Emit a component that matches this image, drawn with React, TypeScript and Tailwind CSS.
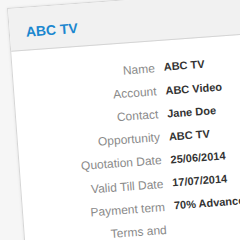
const rows = [
  { label: 'Name', value: 'ABC TV' },
  { label: 'Account', value: 'ABC Video' },
  { label: 'Contact', value: 'Jane Doe' },
  { label: 'Opportunity', value: 'ABC TV' },
  { label: 'Quotation Date', value: '25/06/2014' },
  { label: 'Valid Till Date', value: '17/07/2014' },
  { label: 'Payment term', value: '70% Advance' },
  { label: 'Terms and', value: '' },
];

export default function App() {
  return (
    <div className="w-[240px] h-[240px] overflow-hidden bg-[#f6f6f6] pl-[7px] pt-[8px] font-['Liberation_Sans',Arial,sans-serif]">
      {/* tilted quote card */}
      <div className="w-[320px] h-[300px] origin-top-left rotate-[-4.2deg] bg-white border border-[#d6d6d6] shadow-[0_0_3px_rgba(0,0,0,0.08)]">
        <div className="h-[43px] bg-[#f1f1f1] border-b border-[#d4d4d4] pl-[16px] pt-[16px]">
          <h1 className="text-[14px] leading-[17px] font-bold text-[#1b87cf]">ABC TV</h1>
        </div>
        <div className="pt-[15px]">
          {rows.map((row) => (
            <div key={row.label} className="flex items-center h-[23.2px]">
              <span className="w-[142px] text-right text-[12px] text-[#8a8a8a]">{row.label}</span>
              <span className="pl-[9px] text-[11px] font-bold text-[#333333]">{row.value}</span>
            </div>
          ))}
        </div>
      </div>
    </div>
  );
}
